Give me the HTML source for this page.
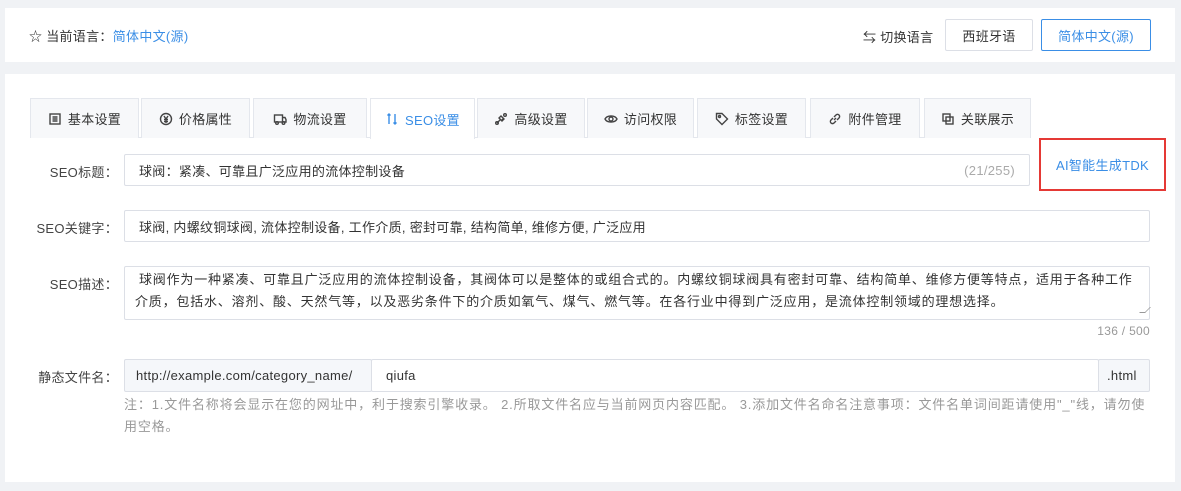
<!DOCTYPE html>
<html><head><meta charset="utf-8"><style>
*{box-sizing:border-box;margin:0;padding:0}
body{width:1181px;height:491px;background:#f0f2f5;font-family:"Liberation Sans","Noto Sans CJK SC",sans-serif;font-size:13px;color:#333;position:relative;overflow:hidden;letter-spacing:0.3px}
.a{position:absolute}
.card{background:#fff}
.btn{border:1px solid #dcdfe6;border-radius:2px;background:#fff;display:flex;align-items:center;justify-content:center;font-size:13px}
.tab{position:absolute;top:98px;height:40px;border:1px solid #e4e7ed;border-bottom:none;background:#f7f8fa;display:flex;align-items:center;justify-content:center;color:#333;gap:6px}
.tab svg{width:14px;height:14px;stroke:#444;fill:none;stroke-width:1.4}
.lbl{position:absolute;right:1063px;font-size:13px;color:#444;text-align:right;white-space:nowrap}
.inp{position:absolute;border:1px solid #dcdfe6;border-radius:2px;background:#fff;padding:0 14px;display:flex;align-items:center;white-space:nowrap}
.blue{color:#3a8ee6}
</style></head><body>
<div class="a card" style="left:5px;top:8px;width:1170px;height:54px"></div>
<div class="a" style="left:29px;top:26px;font-size:13px">☆ 当前语言：<span class="blue">简体中文(源)</span></div>
<div class="a" style="left:863px;top:27px">⇆ 切换语言</div>
<div class="a btn" style="left:945px;top:19px;width:88px;height:32px">西班牙语</div>
<div class="a btn" style="left:1041px;top:19px;width:110px;height:32px;border-color:#3a8ee6;color:#3a8ee6">简体中文(源)</div>

<div class="a card" style="left:5px;top:74px;width:1170px;height:408px"></div>
<div class="a" style="left:30px;top:137px;width:1001px;height:1px;background:#e4e7ed"></div>
<div class="tab" style="left:30px;width:109px"><svg viewBox="0 0 14 14"><rect x="2" y="2" width="10" height="10"/><path d="M4.5 5h5M4.5 7h5M4.5 9h5"/></svg>基本设置</div>
<div class="tab" style="left:141px;width:109px"><svg viewBox="0 0 14 14"><circle cx="7" cy="7" r="5.5"/><path d="M5 4l2 3 2-3M7 7v4M5 7.5h4M5 9.5h4"/></svg>价格属性</div>
<div class="tab" style="left:253px;width:114px"><svg viewBox="0 0 14 14"><rect x="1.5" y="3" width="8" height="7"/><path d="M9.5 5.5h2.5l1 2v2.5h-3.5"/><circle cx="4" cy="11" r="1.3"/><circle cx="10.5" cy="11" r="1.3"/></svg>物流设置</div>
<div class="tab" style="left:370px;width:105px;background:#fff;color:#3a8ee6;height:41px"><svg viewBox="0 0 14 14" style="stroke:#3a8ee6"><path d="M4 2v10M10 2v10M2.5 3.5L4 2l1.5 1.5M8.5 10.5L10 12l1.5-1.5"/></svg>SEO设置</div>
<div class="tab" style="left:477px;width:108px"><svg viewBox="0 0 14 14"><path d="M3 11l3-3M5 6l2-2 3 3-2 2zM8 8l2-2"/><circle cx="11" cy="3" r="1.3"/><circle cx="3" cy="11" r="1.3"/></svg>高级设置</div>
<div class="tab" style="left:587px;width:107px"><svg viewBox="0 0 14 14"><path d="M1 7c2-4 10-4 12 0-2 4-10 4-12 0z"/><circle cx="7" cy="7" r="2"/></svg>访问权限</div>
<div class="tab" style="left:697px;width:109px"><svg viewBox="0 0 14 14"><path d="M7 1.5l5.5 5.5-5.5 5.5-5.5-5.5V1.5z"/><circle cx="4.5" cy="4.5" r="1"/></svg>标签设置</div>
<div class="tab" style="left:810px;width:110px"><svg viewBox="0 0 14 14"><path d="M6 8l2-2M5 6L3 8a2 2 0 003 3l2-2M9 8l2-2a2 2 0 00-3-3L6 5"/></svg>附件管理</div>
<div class="tab" style="left:924px;width:107px"><svg viewBox="0 0 14 14"><rect x="2" y="2" width="7" height="7"/><rect x="5" y="5" width="7" height="7"/></svg>关联展示</div>

<div class="lbl" style="top:162px">SEO标题：</div>
<div class="inp" style="left:124px;top:154px;width:906px;height:32px;justify-content:space-between"><span>球阀：紧凑、可靠且广泛应用的流体控制设备</span><span style="color:#aaa">(21/255)</span></div>
<div class="a" style="left:1039px;top:138px;width:127px;height:53px;border:2px solid #e53935;display:flex;align-items:center;justify-content:center;color:#3a8ee6">AI智能生成TDK</div>

<div class="lbl" style="top:218px">SEO关键字：</div>
<div class="inp" style="left:124px;top:210px;width:1026px;height:32px">球阀, 内螺纹铜球阀, 流体控制设备, 工作介质, 密封可靠, 结构简单, 维修方便, 广泛应用</div>

<div class="lbl" style="top:274px">SEO描述：</div>
<div class="inp" style="left:124px;top:266px;width:1026px;height:54px;white-space:normal;align-items:flex-start;padding:2px 8px 0 10px;line-height:22px;text-indent:4px;letter-spacing:0.8px">球阀作为一种紧凑、可靠且广泛应用的流体控制设备，其阀体可以是整体的或组合式的。内螺纹铜球阀具有密封可靠、结构简单、维修方便等特点，适用于各种工作介质，包括水、溶剂、酸、天然气等，以及恶劣条件下的介质如氧气、煤气、燃气等。在各行业中得到广泛应用，是流体控制领域的理想选择。</div>
<div class="a" style="left:1142px;top:307px;width:6px;height:6px;border-right:1px solid #999;border-bottom:1px solid #999;transform:skew(-45deg)"></div>
<div class="a" style="right:31px;top:324px;color:#999;font-size:12px">136 / 500</div>

<div class="lbl" style="top:367px">静态文件名：</div>
<div class="inp" style="left:124px;top:359px;width:248px;height:33px;background:#f5f7fa;padding:0 11px">http://example.com/category_name/</div>
<div class="inp" style="left:371px;top:359px;width:728px;height:33px">qiufa</div>
<div class="inp" style="left:1098px;top:359px;width:52px;height:33px;background:#f5f7fa;padding:0 8px">.html</div>
<div class="a" style="left:124px;top:394px;width:1030px;color:#999;font-size:13px;line-height:22px;letter-spacing:0.85px">注：1.文件名称将会显示在您的网址中，利于搜索引擎收录。 2.所取文件名应与当前网页内容匹配。 3.添加文件名命名注意事项：文件名单词间距请使用"_"线，请勿使用空格。</div>
</body></html>
